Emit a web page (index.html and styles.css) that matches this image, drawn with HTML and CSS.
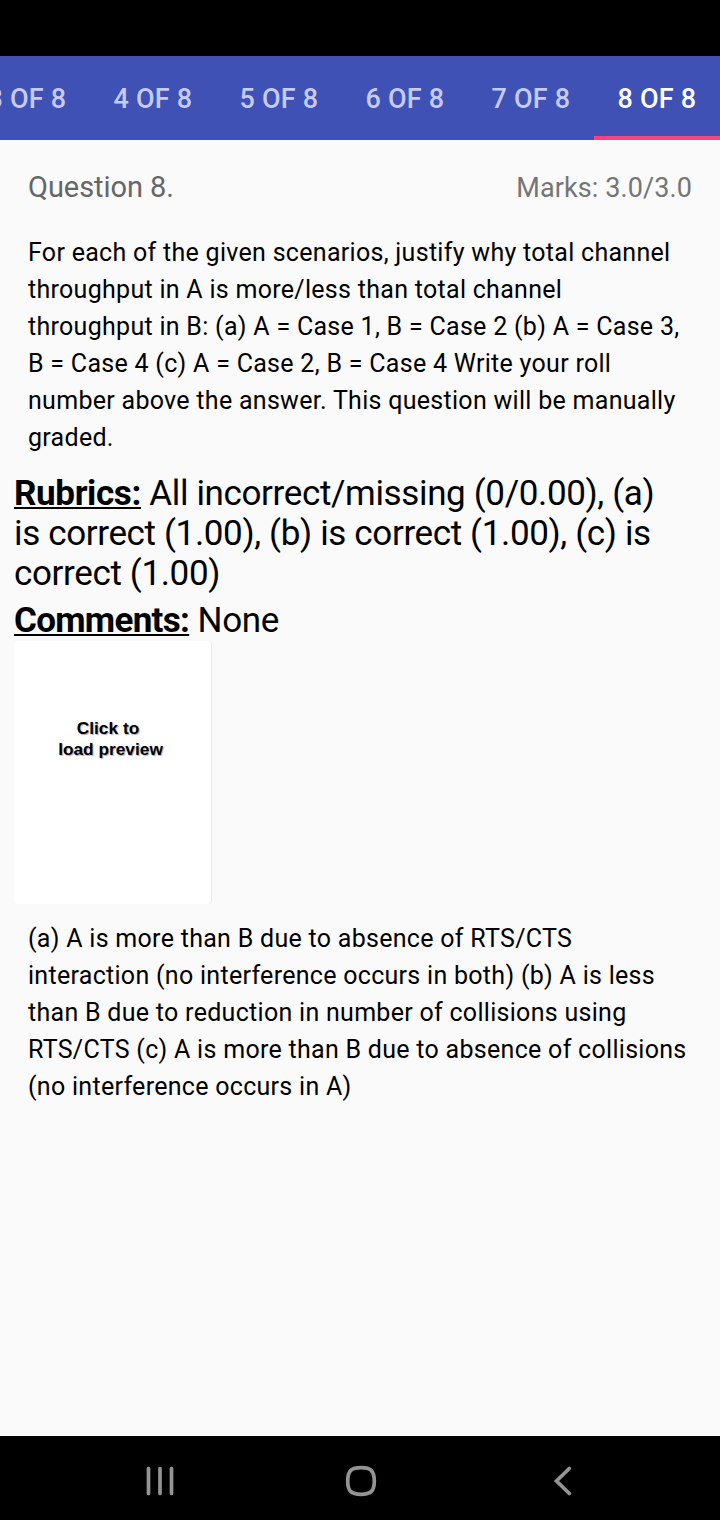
FILE: index.html
```html
<!DOCTYPE html>
<html lang="en">
<head>
<meta charset="utf-8">
<title>Question 8</title>
<link rel="stylesheet" href="styles.css">
</head>
<body>
<div class="status"></div>
<nav class="tabs"><span class="tab">3 OF 8</span><span class="tab">4 OF 8</span><span class="tab">5 OF 8</span><span class="tab">6 OF 8</span><span class="tab">7 OF 8</span><span class="tab active">8 OF 8</span></nav>
<main class="page">
<header class="head"><span class="title">Question 8.</span><span class="marks">Marks: 3.0/3.0</span></header>
<p class="body">For each of the given scenarios, justify why total channel<br>throughput in A is more/less than total channel<br>throughput in B: (a) A = Case 1, B = Case 2 (b) A = Case 3,<br>B = Case 4 (c) A = Case 2, B = Case 4 Write your roll<br>number above the answer. This question will be manually<br>graded.</p>
<p class="note rubrics"><b>Rubrics:</b> All incorrect/missing (0/0.00), (a)<br>is correct (1.00), (b) is correct (1.00), (c) is<br>correct (1.00)</p>
<p class="note"><b class="tight">Comments:</b> None</p>
<div class="preview"><span class="click">Click to</span><span>load preview</span></div>
<p class="body answer">(a) A is more than B due to absence of RTS/CTS<br>interaction (no interference occurs in both) (b) A is less<br>than B due to reduction in number of collisions using<br>RTS/CTS (c) A is more than B due to absence of collisions<br>(no interference occurs in A)</p>
</main>
<footer class="nav">
<svg class="navicons" width="720" height="84" viewBox="0 0 720 84" fill="none" stroke="#949494" stroke-width="3.700" stroke-linecap="round"><path d="M148.500 32.500v25M160 32.500v25M171.500 32.500v25"/><path d="M361 31.700C371 31.700 374.300 35 374.300 45S371 58.300 361 58.300S347.700 55 347.700 45S351 31.700 361 31.700Z"/><path d="M569.300 32.500L556.500 45L569.300 57.500"/></svg>
</footer>
</body>
</html>
```
FILE: styles.css
```css
body { margin: 0; width: 720px; height: 1520px; display: flex; flex-direction: column; overflow: hidden; background: #fafafa; font-family: Roboto, sans-serif; color: #000; }
p { margin: 0; white-space: nowrap; }
.status { height: 56px; background: #000; flex: none; }
.tabs { height: 84px; flex: none; display: flex; justify-content: flex-end; background: #3f51b5; }
.tab { flex: none; box-sizing: border-box; width: 126px; height: 84px; padding: 1px 0 0; line-height: 85px; text-align: center; font-size: 27px; font-weight: 500; letter-spacing: 0.2px; color: #c5cbf3; }
.active { color: #fff; border-bottom: 4px solid #ff4081; }
.page { flex: 1; }
.head { display: flex; justify-content: space-between; padding: 26px 28px 0; height: 42px; line-height: 42px; color: #757575; }
.title { font-size: 29px; color: #666; letter-spacing: -0.05px; }
.marks { font-size: 27px; line-height: 44px; letter-spacing: 0.1px; }
.body { margin: 26px 0 0 28px; font-size: 25px; line-height: 37px; letter-spacing: 0.29px; }
.note { margin-left: 14px; font-size: 35px; line-height: 40px; letter-spacing: -0.36px; }
.note b { text-decoration: underline; text-decoration-thickness: 2px; text-decoration-skip-ink: none; text-underline-offset: 2px; }
.note .tight { letter-spacing: -0.7px; }
.rubrics { margin-top: 18px; margin-bottom: 7px; }
.preview { box-sizing: border-box; width: 198px; height: 263px; padding: 77px 4px 0 0; margin-left: 14px; background: #fff; border-right: 1px solid #e8e8e8; border-radius: 4px; display: flex; flex-direction: column; align-items: center; font: bold 17.3px/20.5px "Liberation Sans", sans-serif; text-shadow: 1px 1px 1px #aab; }
.click { margin-right: 5px; }
.answer { margin-top: 16px; }
.nav { height: 84px; flex: none; background: #000; }
.navicons { display: block; }
```
